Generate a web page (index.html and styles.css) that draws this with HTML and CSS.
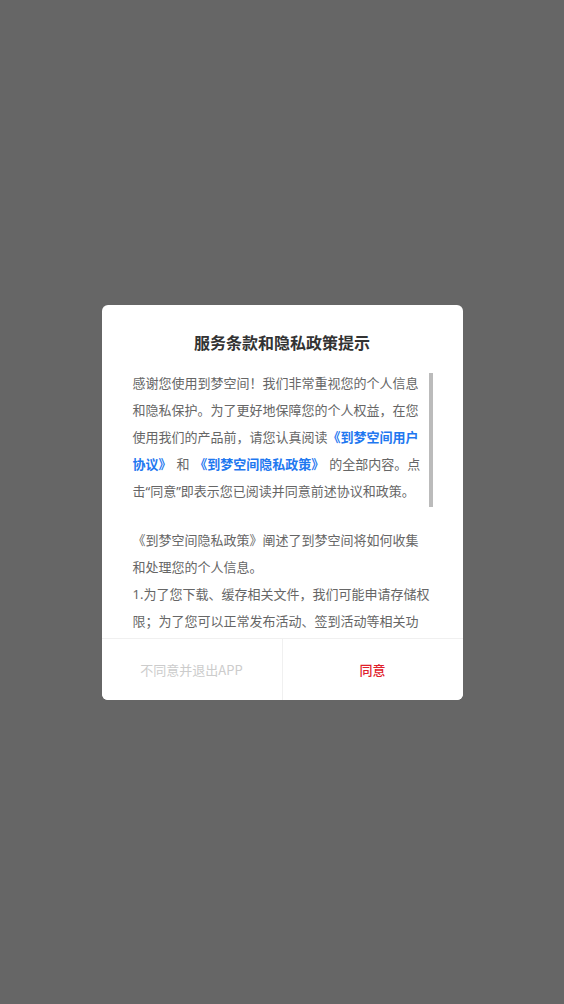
FILE: index.html
```html
<!DOCTYPE html>
<html lang="zh-CN">
<head>
<meta charset="utf-8">
<title>服务条款和隐私政策提示</title>
<link rel="stylesheet" href="styles.css">
</head>
<body>
<div class="overlay">
  <div class="dialog">
    <h1 class="title">服务条款和隐私政策提示</h1>
    <div class="content">
      <div class="scroll">
        <p class="para">感谢您使用到梦空间！我们非常重视您的个人信息和隐私保护。为了更好地保障您的个人权益，在您使用我们的产品前，请您认真阅读<span class="link">《到梦空间用户协议》</span> 和 <span class="link">《到梦空间隐私政策》</span> 的全部内容。点击“同意”即表示您已阅读并同意前述协议和政策。</p>
        <p class="para second">《到梦空间隐私政策》阐述了到梦空间将如何收集和处理您的个人信息。</p>
        <p class="para">1.为了您下载、缓存相关文件，我们可能申请存储权限；为了您可以正常发布活动、签到活动等相关功能，我们可能申请相机、位置等权限。</p>
      </div>
      <div class="thumb"></div>
    </div>
    <div class="footer">
      <button class="btn btn-cancel">不同意并退出APP</button>
      <button class="btn btn-ok">同意</button>
    </div>
  </div>
</div>
</body>
</html>
```
FILE: styles.css
```css
html, body {
  margin: 0;
  padding: 0;
  height: 100%;
}
body {
  font-family: "Noto Sans", "Noto Sans CJK SC", sans-serif;
  background: #666666;
}
.overlay {
  height: 100%;
  display: flex;
  align-items: center;
  justify-content: center;
}
.dialog {
  width: 361px;
  height: 395px;
  background: #ffffff;
  border-radius: 6px;
  display: flex;
  flex-direction: column;
  overflow: hidden;
}
.title {
  margin: 25px 0 0;
  font-family: "Noto Sans CJK SC", sans-serif;
  font-size: 16px;
  line-height: 24px;
  font-weight: bold;
  color: #333333;
  text-align: center;
}
.content {
  position: relative;
  flex: 1;
  margin-top: 16px;
  overflow: hidden;
}
.scroll {
  width: 298px;
  padding-left: 31px;
}
.para {
  margin: 0;
  font-size: 13px;
  line-height: 27px;
  color: #666666;
  word-spacing: 1.5px;
}
.para.second {
  margin-top: 22px;
}
.link {
  color: #1f78f0;
  font-weight: bold;
}
.thumb {
  position: absolute;
  left: 327px;
  top: 3px;
  width: 4px;
  height: 134px;
  background: #bbbbbb;
}
.footer {
  display: flex;
  height: 61px;
  border-top: 1px solid #f0f0f0;
}
.btn {
  flex: 1;
  border: none;
  background: #ffffff;
  font-family: "Noto Sans CJK SC", sans-serif;
  font-size: 13px;
  padding: 0;
  margin: 0;
}
.btn-cancel {
  color: #cccccc;
  border-right: 1px solid #f0f0f0;
}
.btn-ok {
  color: #e0202a;
  font-weight: 500;
}
```
